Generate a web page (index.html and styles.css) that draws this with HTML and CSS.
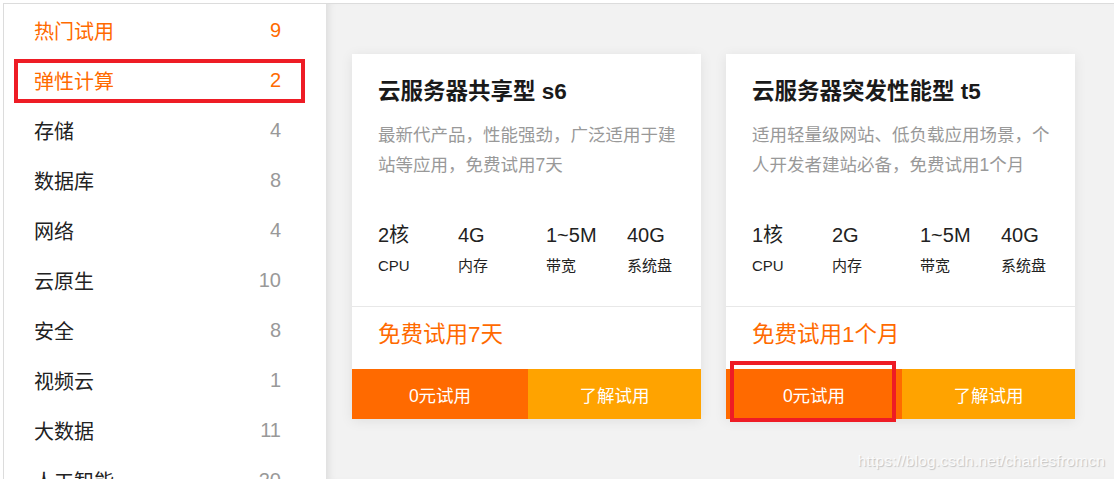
FILE: index.html
```html
<!DOCTYPE html>
<html lang="zh-CN">
  <head>
    <meta charset="UTF-8" />
    <meta name="viewport" content="width=device-width, initial-scale=1.0" />
    <title>免费试用</title>
    <link rel="stylesheet" href="styles.css">
  </head>
  <body>
    <div id="page">
      <ul id="sideMenu">
        <li class="menu-item active"><span>热门试用</span><span class="count">9</span></li>
        <li class="menu-item active marked"><span>弹性计算</span><span class="count">2</span></li>
        <li class="menu-item"><span>存储</span><span class="count">4</span></li>
        <li class="menu-item"><span>数据库</span><span class="count">8</span></li>
        <li class="menu-item"><span>网络</span><span class="count">4</span></li>
        <li class="menu-item"><span>云原生</span><span class="count">10</span></li>
        <li class="menu-item"><span>安全</span><span class="count">8</span></li>
        <li class="menu-item"><span>视频云</span><span class="count">1</span></li>
        <li class="menu-item"><span>大数据</span><span class="count">11</span></li>
        <li class="menu-item"><span>人工智能</span><span class="count">20</span></li>
      </ul>
      <div id="productArea">
        <div class="product-card">
          <div class="card-body">
            <div class="card-title">云服务器共享型 s6</div>
            <div class="card-desc">最新代产品，性能强劲，广泛适用于建站等应用，免费试用7天</div>
            <div class="spec-list">
              <div class="spec"><div class="spec-value">2核</div><div class="spec-label">CPU</div></div>
              <div class="spec"><div class="spec-value">4G</div><div class="spec-label">内存</div></div>
              <div class="spec"><div class="spec-value">1~5M</div><div class="spec-label">带宽</div></div>
              <div class="spec"><div class="spec-value">40G</div><div class="spec-label">系统盘</div></div>
            </div>
          </div>
          <div class="card-price">免费试用7天</div>
          <div class="card-actions">
            <button class="btn-try">0元试用</button>
            <button class="btn-info">了解试用</button>
          </div>
        </div>
        <div class="product-card">
          <div class="card-body">
            <div class="card-title">云服务器突发性能型 t5</div>
            <div class="card-desc">适用轻量级网站、低负载应用场景，个人开发者建站必备，免费试用1个月</div>
            <div class="spec-list">
              <div class="spec"><div class="spec-value">1核</div><div class="spec-label">CPU</div></div>
              <div class="spec"><div class="spec-value">2G</div><div class="spec-label">内存</div></div>
              <div class="spec"><div class="spec-value">1~5M</div><div class="spec-label">带宽</div></div>
              <div class="spec"><div class="spec-value">40G</div><div class="spec-label">系统盘</div></div>
            </div>
          </div>
          <div class="card-price">免费试用1个月</div>
          <div class="card-actions">
            <button class="btn-try marked">0元试用</button>
            <button class="btn-info">了解试用</button>
          </div>
        </div>
        <div id="watermark">https://blog.csdn.net/charlesfromcn</div>
      </div>
    </div>
  </body>
</html>
```

FILE: styles.css
```css
html,
body {
  margin: 0;
  height: 100%;
  background-color: #fff;
  font-family: "Liberation Sans", Arial, "Noto Sans CJK SC", sans-serif;
  overflow: hidden;
}
#page {
  display: flex;
  margin: 3px 0 0 3px;
  height: calc(100vh - 3px);
  border-top: 1px solid #dcdcdc;
  border-left: 1px solid #dcdcdc;
  box-sizing: border-box;
  overflow: hidden;
}
#sideMenu {
  list-style: none;
  margin: 0;
  padding: 1px 0 0 0;
  width: 322px;
  flex-shrink: 0;
  background-color: #fff;
}
.menu-item {
  position: relative;
  display: flex;
  justify-content: space-between;
  align-items: center;
  height: 50px;
  padding: 0 45px 0 30px;
  font-size: 20px;
  color: #222;
}
.menu-item .count {
  color: #999;
  font-size: 20px;
}
.menu-item.active,
.menu-item.active .count {
  color: #ff6a00;
}
.marked::after {
  content: "";
  position: absolute;
  border: 4px solid #ee1c25;
}
.menu-item.marked::after {
  left: 10px;
  right: 21px;
  top: 4px;
  bottom: 2px;
}
#productArea {
  position: relative;
  flex: 1;
  display: flex;
  align-items: flex-start;
  gap: 25px;
  padding: 50px 0 0 26px;
  background-color: #f2f2f2;
  box-shadow: inset 8px 0 8px -6px rgba(0, 0, 0, 0.1);
}
.product-card {
  width: 349px;
  background-color: #fff;
  box-shadow: 0 2px 12px rgba(0, 0, 0, 0.08);
}
.card-body {
  padding: 26px 24px 30px 26px;
  border-bottom: 1px solid #e8e8e8;
}
.card-title {
  font-size: 22.5px;
  line-height: 24px;
  font-weight: bold;
  color: #1a1a1a;
}
.card-desc {
  margin-top: 16px;
  font-size: 17.5px;
  line-height: 30px;
  color: #999;
}
.spec-list {
  display: grid;
  grid-template-columns: 80px 88px 81px auto;
  margin-top: 41px;
  color: #222;
}
.spec-value {
  font-size: 20px;
  line-height: 28px;
}
.spec-label {
  margin-top: 7px;
  font-size: 15px;
  line-height: 20px;
}
.card-price {
  padding: 14px 26px 20px;
  font-size: 22.5px;
  line-height: 28px;
  color: #ff6a00;
}
.card-actions {
  display: flex;
}
.card-actions button {
  position: relative;
  height: 50px;
  border: none;
  color: #fff;
  font-family: inherit;
  font-size: 17.5px;
}
.btn-try {
  width: 176px;
  background-color: #ff6a00;
}
.btn-info {
  flex: 1;
  background-color: #ffa300;
}
.btn-try.marked::after {
  left: 4px;
  right: 6px;
  top: -8px;
  bottom: -3px;
}
#watermark {
  position: absolute;
  right: 9px;
  bottom: 9px;
  font-size: 15.5px;
  letter-spacing: 0.2px;
  color: rgba(255, 255, 255, 0.85);
  text-shadow: 1px 1px 1px rgba(0, 0, 0, 0.2);
}
```
